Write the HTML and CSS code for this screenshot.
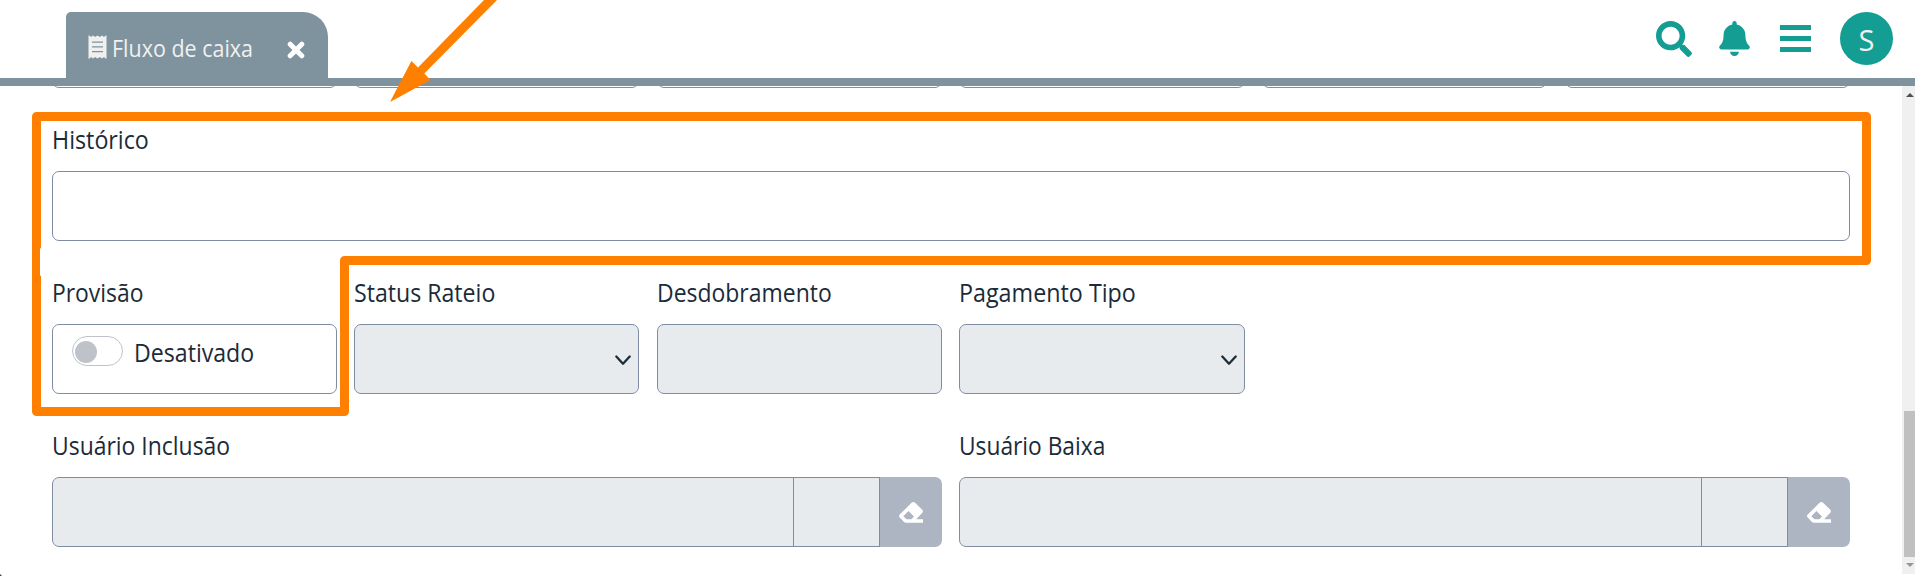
FILE: index.html
```html
<!DOCTYPE html>
<html lang="pt-BR">
<head>
<meta charset="utf-8">
<title>Fluxo de caixa</title>
<link rel="stylesheet" href="styles.css">
</head>
<body>
<header class="topbar">
  <div class="tab">
    <svg class="tab-icon" viewBox="0 0 18 24"><path fill="#f0f0f0" fill-rule="evenodd" d="M0 .6 Q1 0 1.500 1 L2.500 2 L4.500 .5 L6.600 2 L9 .5 L11.400 2 L13.500 .5 L15.500 2 L16.500 1 Q17.300 0 18 .6 V23.400 Q17.300 24 16.500 23 L15.500 22 L13.500 23.500 L11.400 22 L9 23.500 L6.600 22 L4.500 23.500 L2.500 22 L1.500 23 Q1 24 0 23.400 Z M3.500 6.500 V7.700 H14.500 V6.500 Z M3.500 11.300 V12.500 H14.500 V11.300 Z M3.500 16 V17.200 H14.500 V16 Z"/></svg>
    <span class="tab-title">Fluxo de caixa</span>
    <svg class="tab-close" viewBox="0 0 18 18"><path d="M3.200 3.200 L14.800 14.800 M14.800 3.200 L3.200 14.800" stroke="#fff" stroke-width="5" stroke-linecap="round"/></svg>
  </div>
  <nav class="actions">
    <svg class="ico-search" viewBox="0 0 512 512"><path fill="#139d93" d="M505 442.700L405.300 343c-4.500-4.500-10.600-7-17-7H372c27.600-35.300 44-79.700 44-128C416 93.100 322.900 0 208 0S0 93.100 0 208s93.100 208 208 208c48.300 0 92.700-16.400 128-44v16.300c0 6.400 2.500 12.500 7 17l99.700 99.700c9.400 9.400 24.600 9.400 33.900 0l28.300-28.300c9.400-9.400 9.400-24.600.1-34zM208 336c-70.700 0-128-57.200-128-128 0-70.700 57.200-128 128-128 70.700 0 128 57.200 128 128 0 70.700-57.200 128-128 128z"/></svg>
    <svg class="ico-bell" viewBox="0 0 448 512"><path fill="#139d93" d="M224 512c35.320 0 63.970-28.650 63.970-64H160.030c0 35.350 28.650 64 63.970 64zm215.390-149.710c-19.320-20.760-55.470-51.990-55.470-154.290 0-77.700-54.480-139.900-127.940-155.160V32c0-17.670-14.320-32-31.980-32s-31.980 14.330-31.980 32v20.840C118.560 68.100 64.080 130.300 64.080 208c0 102.300-36.150 133.530-55.470 154.290-6 6.450-8.660 14.160-8.610 21.710.11 16.400 12.980 32 32.100 32h383.800c19.120 0 32-15.600 32.100-32 .05-7.550-2.610-15.270-8.610-21.710z"/></svg>
    <svg class="ico-menu" viewBox="0 0 31 27"><path fill="#139d93" d="M0 0H31V5H0ZM0 11H31V16H0ZM0 22H31V27H0Z"/></svg>
    <span class="avatar">S</span>
  </nav>
</header>
<div class="content">
  <main class="form">
    <div class="grid previous"><i></i><i></i><i></i><i></i><i></i><i></i></div>
    <section class="grid">
      <div class="field full"><label class="t-historico">Histórico</label><div class="box"></div></div>
    </section>
    <section class="grid">
      <div class="field"><label class="t-provisao">Provisão</label><div class="box toggle"><span class="switch"></span><span class="state">Desativado</span></div></div>
      <div class="field"><label class="t-status">Status Rateio</label><div class="box off select"><svg viewBox="0 0 16 11"><path d="M1.300 1.500 L8 8.700 L14.700 1.500"/></svg></div></div>
      <div class="field"><label class="t-desdob">Desdobramento</label><div class="box off"></div></div>
      <div class="field"><label class="t-pag">Pagamento Tipo</label><div class="box off select"><svg viewBox="0 0 16 11"><path d="M1.300 1.500 L8 8.700 L14.700 1.500"/></svg></div></div>
    </section>
    <section class="grid">
      <div class="field half"><label class="t-incl">Usuário Inclusão</label><div class="group"><span class="name"></span><span class="code"></span><button class="erase"><svg viewBox="0 0 24 21"><path fill="#fff" fill-rule="evenodd" d="M12.800 .6 Q14.300 -.5 15.800 .6 L23.300 7.700 Q24.500 9.200 23.300 10.700 L17.200 17.300 H24 V20.700 H7 Q5.800 20.700 5 19.900 L.7 15.600 Q-.6 14.200 .7 12.600 Z M9.500 9 L4.300 14.200 L7.500 17.300 H12.400 L15 14.500 Z"/></svg></button></div></div>
      <div class="field half"><label class="t-baixa">Usuário Baixa</label><div class="group"><span class="name"></span><span class="code"></span><button class="erase"><svg viewBox="0 0 24 21"><path fill="#fff" fill-rule="evenodd" d="M12.800 .6 Q14.300 -.5 15.800 .6 L23.300 7.700 Q24.500 9.200 23.300 10.700 L17.200 17.300 H24 V20.700 H7 Q5.800 20.700 5 19.900 L.7 15.600 Q-.6 14.200 .7 12.600 Z M9.500 9 L4.300 14.200 L7.500 17.300 H12.400 L15 14.500 Z"/></svg></button></div></div>
    </section>
  </main>
  <div class="scrollbar">
    <svg class="arrow" viewBox="0 0 8 4"><path fill="#505050" d="M4 0 L8 4 H0Z"/></svg>
    <div class="thumb"></div>
    <svg class="arrow" viewBox="0 0 8 4"><path fill="#969696" d="M0 0 H8 L4 4Z"/></svg>
  </div>
</div>
<svg class="annotation" viewBox="0 0 1915 576">
  <path class="outline" d="M36.500 116.500 H1866.500 V260.500 H344.500 V411.500 H36.500 Z"/>
  <rect x="40" y="248" width="2" height="28" rx="1" fill="#fff"/>
  <path fill="#ff8000" d="M484 0 H497 L424.300 73.500 L430.400 80 L390 102 L411.400 61 L418 67.500 Z"/>
  <path fill="#444" d="M0 574 L2 576 H0Z"/>
</svg>
</body>
</html>
```
FILE: styles.css
```css
* { box-sizing: border-box; }
body {
  margin: 0;
  width: 1915px;
  height: 576px;
  overflow: hidden;
  background: #fff;
  color: #1b2b3a;
  font-family: "Open Sans", "Noto Sans", sans-serif;
  font-size: 25px;
}
svg { display: block; flex: none; }
.topbar {
  display: flex;
  justify-content: space-between;
  height: 86px;
  padding: 12px 22px 0 66px;
  border-bottom: 8px solid #7e939d;
}
.tab {
  display: flex;
  width: 262px;
  height: 66px;
  padding: 23px 0 0 22px;
  background: #7e939d;
  border-radius: 5px 25px 0 0;
  color: #f0f0f0;
}
.tab-icon { width: 19px; height: 24px; }
.tab-title { margin-left: 5px; width: 145px; line-height: 26px; font-size: 24px; white-space: nowrap; transform: scaleX(.895); transform-origin: left; }
.tab-close { width: 18px; height: 18px; margin: 6px 0 0 30px; }
.actions { display: flex; align-items: flex-start; }
.ico-search { width: 36px; height: 36px; margin: 9px 27px 0 0; }
.ico-bell { width: 31px; height: 35px; margin: 9px 30px 0 0; }
.ico-menu { width: 31px; height: 27px; margin: 13px 29px 0 0; }
.avatar {
  width: 53px;
  height: 53px;
  border-radius: 50%;
  background: #139d93;
  color: #f0f0f0;
  text-align: center;
  line-height: 55px;
  font-size: 29px;
}
.content { display: flex; height: 490px; }
.form { flex: 1; padding: 0 52.300px 0 51.700px; }
.grid { display: grid; grid-template-columns: repeat(6, 1fr); column-gap: 17.500px; }
.previous { height: 2px; overflow: hidden; align-content: end; }
.previous i { height: 20px; border: 1px solid #808ca3; border-radius: 7px; }
.full { grid-column: span 6; }
.half { grid-column: span 3; }
.field label { display: block; height: 34px; line-height: 34px; margin: 34px 0 15px; white-space: nowrap; width: max-content; transform-origin: left; }
.t-historico { transform: scaleX(.93); }
.t-provisao { transform: scaleX(.915); }
.t-status { transform: scaleX(.925); }
.t-desdob { transform: scaleX(.918); }
.t-pag { transform: scaleX(.932); }
.t-incl { transform: scaleX(.917); }
.t-baixa { transform: scaleX(.91); }
.box, .name, .code { height: 70px; border: 1px solid #808ca3; }
.box { border-radius: 7px; }
.off, .name, .code { background: #e7ebee; }
.toggle { display: flex; padding: 11px 0 0 19px; }
.switch { width: 51px; height: 30px; border: 1px solid #bec3c9; border-radius: 15px; padding: 4px 2px; }
.switch::before { content: ""; display: block; width: 22px; height: 22px; border-radius: 50%; background: #bdc3c8; }
.state { margin-left: 11px; height: 32px; line-height: 32px; transform: scaleX(.925); transform-origin: left; }
.select { display: flex; justify-content: flex-end; padding: 30px 7px 0 0; }
.select svg { width: 16px; height: 11px; }
.select path { fill: none; stroke: #1c2d3a; stroke-width: 2.300; stroke-linecap: round; stroke-linejoin: round; }
.group { display: flex; }
.name { flex: 1; border-radius: 7px 0 0 7px; }
.code { width: 87px; margin-left: -1px; }
.erase { display: flex; align-items: center; justify-content: center; width: 62px; height: 70px; padding: 0; border: 0; border-radius: 0 7px 7px 0; background: #adb4c2; }
.erase svg { width: 24px; height: 21px; }
.scrollbar { display: flex; flex-direction: column; width: 13px; height: 488px; background: #f0f0f0; padding: 7px 0 7px 2px; }
.arrow { width: 8px; height: 4px; margin-left: 2px; }
.thumb { height: 146px; margin: 314px 0 6px; background: #c0c0c0; }
.annotation { position: absolute; left: 0; top: 0; width: 1915px; height: 576px; }
.outline { fill: none; stroke: #ff8000; stroke-width: 9; stroke-linejoin: round; }
```
